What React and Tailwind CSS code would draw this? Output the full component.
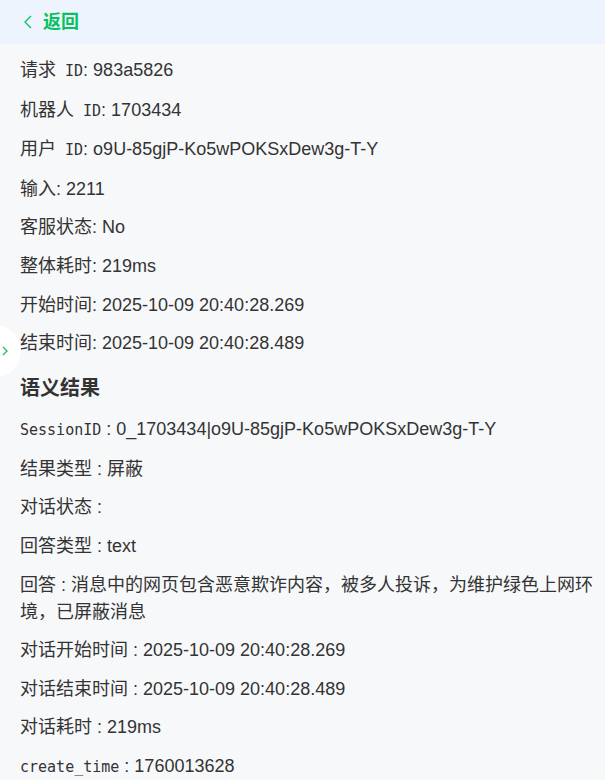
import React from 'react';

const mono = { fontFamily: '"DejaVu Sans Mono", "Noto Sans CJK SC", monospace' };

const base = [
    { label: '请求', code: 'ID', value: '983a5826' },
    { label: '机器人', code: 'ID', value: '1703434' },
    { label: '用户', code: 'ID', value: 'o9U-85gjP-Ko5wPOKSxDew3g-T-Y' },
    { label: '输入', value: '2211' },
    { label: '客服状态', value: 'No' },
    { label: '整体耗时', value: '219ms' },
    { label: '开始时间', value: '2025-10-09 20:40:28.269' },
    { label: '结束时间', value: '2025-10-09 20:40:28.489' },
];

const semantic = [
    { code: 'SessionID', value: '0_1703434|o9U-85gjP-Ko5wPOKSxDew3g-T-Y' },
    { label: '结果类型', value: '屏蔽' },
    { label: '对话状态', value: '' },
    { label: '回答类型', value: 'text' },
    { label: '回答', value: '消息中的网页包含恶意欺诈内容，被多人投诉，为维护绿色上网环境，已屏蔽消息' },
    { label: '对话开始时间', value: '2025-10-09 20:40:28.269' },
    { label: '对话结束时间', value: '2025-10-09 20:40:28.489' },
    { label: '对话耗时', value: '219ms' },
    { code: 'create_time', value: '1760013628' },
];

const App = () => {
    return (
        <div
            className="min-h-[780px] bg-[#f7f8fa] text-[#333] relative"
            style={{ fontFamily: '"Liberation Sans", "Noto Sans CJK SC", sans-serif' }}
        >
            {/* Header */}
            <div className="h-11 bg-[#eef4fe] flex items-center pl-6">
                <button className="flex items-center gap-[11px] text-[#07c160] font-bold text-[18px]">
                    <svg width="8" height="14" viewBox="0 0 8 14" fill="none">
                        <path d="M7 1L1 7l6 6" stroke="#07c160" strokeWidth="1.3" />
                    </svg>
                    返回
                </button>
            </div>

            <div className="pl-5 pr-[8px] pt-[13px]">
                <div className="flex flex-col gap-[11.6px]">
                    {base.map((row) => (
                        <p key={row.label} className="text-[18px] leading-[27px]">
                            {row.label}
                            {row.code && (
                                <span className="text-[15px]" style={mono}>
                                    {' '}{row.code}
                                </span>
                            )}
                            : {row.value}
                        </p>
                    ))}
                </div>

                <h2 className="text-[20px] font-bold leading-[30px] mt-[16px] mb-[13px]">语义结果</h2>

                <div className="flex flex-col gap-[11.6px]">
                    {semantic.map((row) => (
                        <p key={row.label || row.code} className="text-[18px] leading-[27px]">
                            {row.code ? (
                                <span className="text-[15px]" style={mono}>{row.code}</span>
                            ) : (
                                row.label
                            )}
                            {' : '}
                            {row.value}
                        </p>
                    ))}
                </div>
            </div>

            {/* Side toggle tab */}
            <div className="absolute left-[-31px] top-[325px] w-[52px] h-[52px] rounded-full bg-white flex items-center justify-end pr-[13px]">
                <svg width="6" height="10" viewBox="0 0 6 10" fill="none">
                    <path d="M1 1l4 4-4 4" stroke="#22c55e" strokeWidth="1.4" />
                </svg>
            </div>
        </div>
    );
};

export default App;
